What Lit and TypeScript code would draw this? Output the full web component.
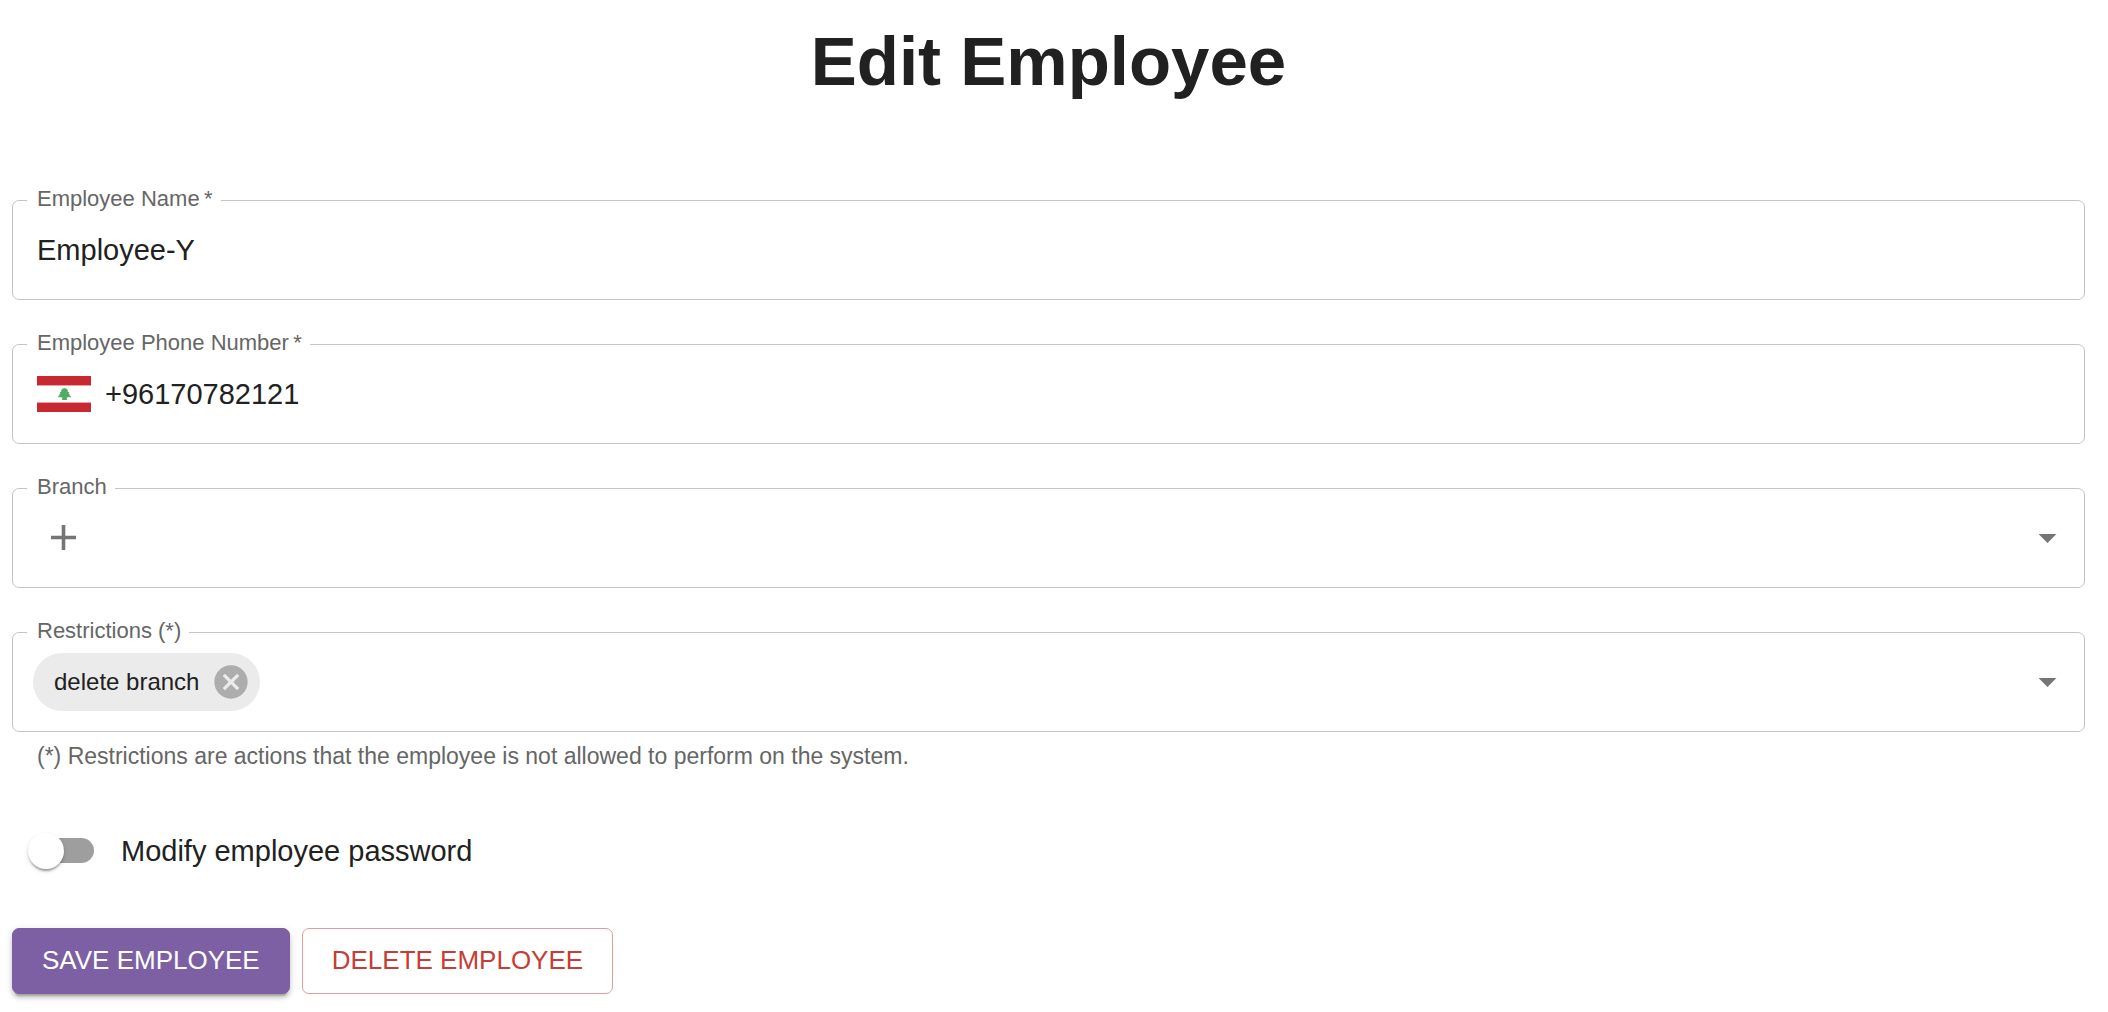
import { LitElement, html, css, svg } from "lit";
import { customElement, state } from "lit/decorators.js";

const addIcon = svg`<path d="M19 13h-6v6h-2v-6H5v-2h6V5h2v6h6v2z"/>`;
const arrowIcon = svg`<path d="M7 10l5 5 5-5z"/>`;
const cancelIcon = svg`<path d="M12 2C6.47 2 2 6.47 2 12s4.47 10 10 10 10-4.47 10-10S17.53 2 12 2zm5 13.59L15.59 17 12 13.41 8.41 17 7 15.59 10.59 12 7 8.41 8.41 7 12 10.59 15.59 7 17 8.41 13.41 12 17 15.59z"/>`;

@customElement("app-root")
export class AppRoot extends LitElement {
  static styles = css`
    :host {
      display: block;
      font-family: "Liberation Sans", Arial, Helvetica, sans-serif;
      color: #212121;
      background: #fff;
    }
    * {
      box-sizing: border-box;
    }
    .page {
      padding: 20px 23px 18px 12px;
    }
    .title {
      margin: 0 0 84px;
      font-size: 69px;
      line-height: 84px;
      font-weight: 700;
      text-align: center;
    }
    .form {
      display: flex;
      flex-direction: column;
    }
    .fields {
      display: flex;
      flex-direction: column;
      gap: 32px;
    }
    .field {
      margin: 0;
      padding: 0 15px 0 14px;
      min-width: 0;
      border: 1px solid #c4c4c4;
      border-radius: 7px;
    }
    .legend {
      padding: 0 8px 2px 10px;
      font-size: 22px;
      line-height: 22px;
      color: #666;
    }
    .control {
      display: flex;
      align-items: center;
      height: 87px;
      padding: 0 0 12px 10px;
    }
    .control.chips {
      padding-left: 6px;
    }
    .text {
      flex: 1;
      min-width: 0;
      padding: 0;
      border: 0;
      outline: 0;
      background: none;
      font: inherit;
      font-size: 29px;
      line-height: 40px;
      color: inherit;
    }
    .flag {
      width: 54px;
      height: 36px;
      margin-right: 14px;
    }
    .icon {
      display: block;
      width: 43px;
      height: 43px;
      fill: #757575;
    }
    .add {
      padding: 0 5px;
      border: 0;
      background: none;
      cursor: pointer;
    }
    .picker {
      flex: 1;
      display: grid;
      align-items: center;
    }
    .select {
      grid-area: 1 / 1;
      width: 100%;
      height: 58px;
      appearance: none;
      border: 0;
      outline: 0;
      background: none;
      font: inherit;
      font-size: 29px;
      color: inherit;
    }
    .arrow {
      grid-area: 1 / 1;
      justify-self: end;
      pointer-events: none;
    }
    .chip {
      display: flex;
      align-items: center;
      height: 58px;
      padding: 0 9px 0 21px;
      gap: 12px;
      border-radius: 29px;
      background: #ebebeb;
      font-size: 24px;
    }
    .remove {
      padding: 0;
      border: 0;
      background: none;
      cursor: pointer;
    }
    .remove .icon {
      width: 40px;
      height: 40px;
      fill: #adadad;
    }
    .help {
      margin: 11px 25px 0;
      font-size: 23px;
      line-height: 26px;
      color: #666;
    }
    .toggle {
      display: flex;
      align-items: center;
      align-self: flex-start;
      gap: 27px;
      margin: 62px 0 57px 16px;
      font-size: 29px;
      line-height: 40px;
      cursor: pointer;
    }
    .switch {
      position: relative;
      width: 66px;
      height: 36px;
      margin: 0;
      appearance: none;
      cursor: pointer;
    }
    .switch::before {
      content: "";
      position: absolute;
      inset: 5px 0 6px 5px;
      border-radius: 13px;
      background: #9e9e9e;
    }
    .switch::after {
      content: "";
      position: absolute;
      top: 0;
      left: 0;
      width: 36px;
      height: 36px;
      border-radius: 50%;
      background: #fff;
      box-shadow:
        0 4px 2px -2px rgba(0, 0, 0, 0.2),
        0 2px 2px rgba(0, 0, 0, 0.14),
        0 2px 5px rgba(0, 0, 0, 0.12);
    }
    .switch:checked::before {
      background: #b09fc9;
    }
    .switch:checked::after {
      left: 30px;
      background: #7d60a3;
    }
    .actions {
      display: flex;
      gap: 12px;
    }
    .button {
      height: 66px;
      padding: 0 29px 2px;
      border: 1px solid transparent;
      border-radius: 7px;
      font: inherit;
      font-size: 26px;
      text-transform: uppercase;
      cursor: pointer;
    }
    .save {
      background: #7d60a3;
      border-color: #7d60a3;
      color: #fff;
      box-shadow:
        0 5px 2px -3px rgba(0, 0, 0, 0.2),
        0 4px 4px rgba(0, 0, 0, 0.14),
        0 2px 9px rgba(0, 0, 0, 0.12);
    }
    .delete {
      background: #fff;
      border-color: #e29d99;
      color: #c63d35;
    }
  `;

  @state() private restrictions = ["delete branch"];

  private removeRestriction(name: string) {
    this.restrictions = this.restrictions.filter((r) => r !== name);
  }

  private icon(shape: unknown, cls = "") {
    return html`<svg class="icon ${cls}" viewBox="0 0 24 24" aria-hidden="true">${shape}</svg>`;
  }

  render() {
    return html`
      <main class="page">
        <h1 class="title">Edit Employee</h1>
        <form class="form" @submit=${(e: Event) => e.preventDefault()}>
          <div class="fields">
            <fieldset class="field">
              <legend class="legend"><label for="name">Employee Name&thinsp;*</label></legend>
              <div class="control">
                <input class="text" id="name" type="text" required .value=${"Employee-Y"} />
              </div>
            </fieldset>

            <fieldset class="field">
              <legend class="legend"><label for="phone">Employee Phone Number&thinsp;*</label></legend>
              <div class="control">
                <svg class="flag" viewBox="0 0 54 36" aria-hidden="true">
                  <path fill="#fff" d="M0 0h54v36H0z" />
                  <path fill="#c6292f" d="M0 0h54v9H0zM0 27h54v9H0z" />
                  <path fill="#e7a1a3" d="M0 9h54v1H0zM0 26h54v1H0z" />
                  <path
                    fill="#4fae63"
                    d="M27.500 12L30 13L31 15L30.500 15.500L32.500 16.500L31.500 17.500L33 18.500L32.500 19.500L34 20.500V21.300H30.500L29.500 22L30 23.500V24H25V23.500L25.500 22L24.500 21.300H21V20.500L22.500 19.500L22 18.500L23.500 17.500L22.500 16.500L24.500 15.500L24 15L25 13Z"
                  />
                </svg>
                <input class="text" id="phone" type="tel" required .value=${"+96170782121"} />
              </div>
            </fieldset>

            <fieldset class="field">
              <legend class="legend"><label for="branch">Branch</label></legend>
              <div class="control">
                <button class="add" type="button" aria-label="Add branch">${this.icon(addIcon)}</button>
                <div class="picker">
                  <select class="select" id="branch"><option></option></select>
                  ${this.icon(arrowIcon, "arrow")}
                </div>
              </div>
            </fieldset>

            <fieldset class="field">
              <legend class="legend"><label for="restrictions">Restrictions (*)</label></legend>
              <div class="control chips">
                ${this.restrictions.map(
                  (name) => html`
                    <span class="chip">
                      ${name}
                      <button
                        class="remove"
                        type="button"
                        aria-label="Remove ${name}"
                        @click=${() => this.removeRestriction(name)}
                      >
                        ${this.icon(cancelIcon)}
                      </button>
                    </span>
                  `
                )}
                <div class="picker">
                  <select class="select" id="restrictions"><option></option></select>
                  ${this.icon(arrowIcon, "arrow")}
                </div>
              </div>
            </fieldset>
          </div>
          <p class="help">
            (*) Restrictions are actions that the employee is not allowed to perform on the system.
          </p>

          <label class="toggle">
            <input class="switch" type="checkbox" role="switch" />
            Modify employee password
          </label>

          <div class="actions">
            <button class="button save" type="submit">Save employee</button>
            <button class="button delete" type="button">Delete employee</button>
          </div>
        </form>
      </main>
    `;
  }
}
